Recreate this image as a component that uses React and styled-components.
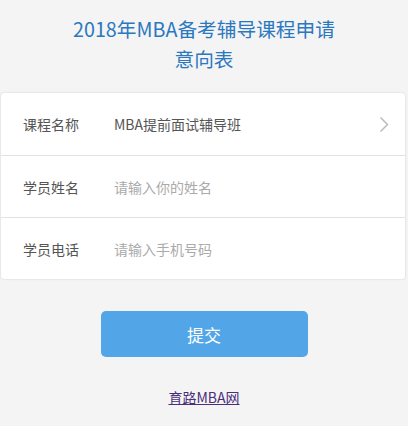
import React from "react";
import styled, { createGlobalStyle } from "styled-components";

const Global = createGlobalStyle`
  html, body { margin: 0; padding: 0; background: #f4f4f4; }
  body { font-family: "Microsoft YaHei", "Noto Sans CJK SC", "Liberation Sans", sans-serif; }
`;

const Page = styled.div`
  width: 408px;
  min-height: 426px;
  background: #f4f4f4;
  display: flex;
  flex-direction: column;
  align-items: center;
`;

const Title = styled.h1`
  margin: 14px 0 0;
  font-size: 19.7px;
  font-weight: normal;
  line-height: 30px;
  color: #2b78bf;
  text-align: center;
`;

const Card = styled.div`
  margin-top: 19px;
  align-self: stretch;
  margin-left: 1px;
  margin-right: 3px;
  background: #fff;
  border-radius: 3px;
  box-shadow: 0 0 2px rgba(0,0,0,0.18);
`;

const Row = styled.div`
  height: 62px;
  display: flex;
  align-items: center;
  padding: 0 16px 0 22px;
  border-top: ${p => (p.first ? "none" : "1px solid #e2e2e2")};
  box-sizing: border-box;
`;

const Label = styled.span`
  width: 91px;
  font-size: 14px;
  color: #555;
`;

const Value = styled.span`
  flex: 1;
  font-size: 14px;
  color: ${p => (p.placeholder ? "#aaa" : "#555")};
`;

const Button = styled.button`
  margin-top: 32px;
  width: 207px;
  height: 46px;
  border: none;
  border-radius: 5px;
  background: #52a6e8;
  color: #fff;
  font-family: inherit;
  font-size: 17px;
`;

const Link = styled.a`
  margin-top: 30px;
  font-size: 14px;
  color: #4a2f7a;
  text-decoration: underline;
`;

export default function App() {
  return (
    <Page>
      <Global />
      <Title>2018年MBA备考辅导课程申请<br />意向表</Title>
      <Card>
        <Row first>
          <Label>课程名称</Label>
          <Value>MBA提前面试辅导班</Value>
          <svg width="10" height="17" viewBox="0 0 10 17">
            <path d="M1.5 1.5 L8.5 8.5 L1.5 15.5" fill="none" stroke="#bbb" strokeWidth="1.5" />
          </svg>
        </Row>
        <Row>
          <Label>学员姓名</Label>
          <Value placeholder="1">请输入你的姓名</Value>
        </Row>
        <Row>
          <Label>学员电话</Label>
          <Value placeholder="1">请输入手机号码</Value>
        </Row>
      </Card>
      <Button>提交</Button>
      <Link href="#">育路MBA网</Link>
    </Page>
  );
}
